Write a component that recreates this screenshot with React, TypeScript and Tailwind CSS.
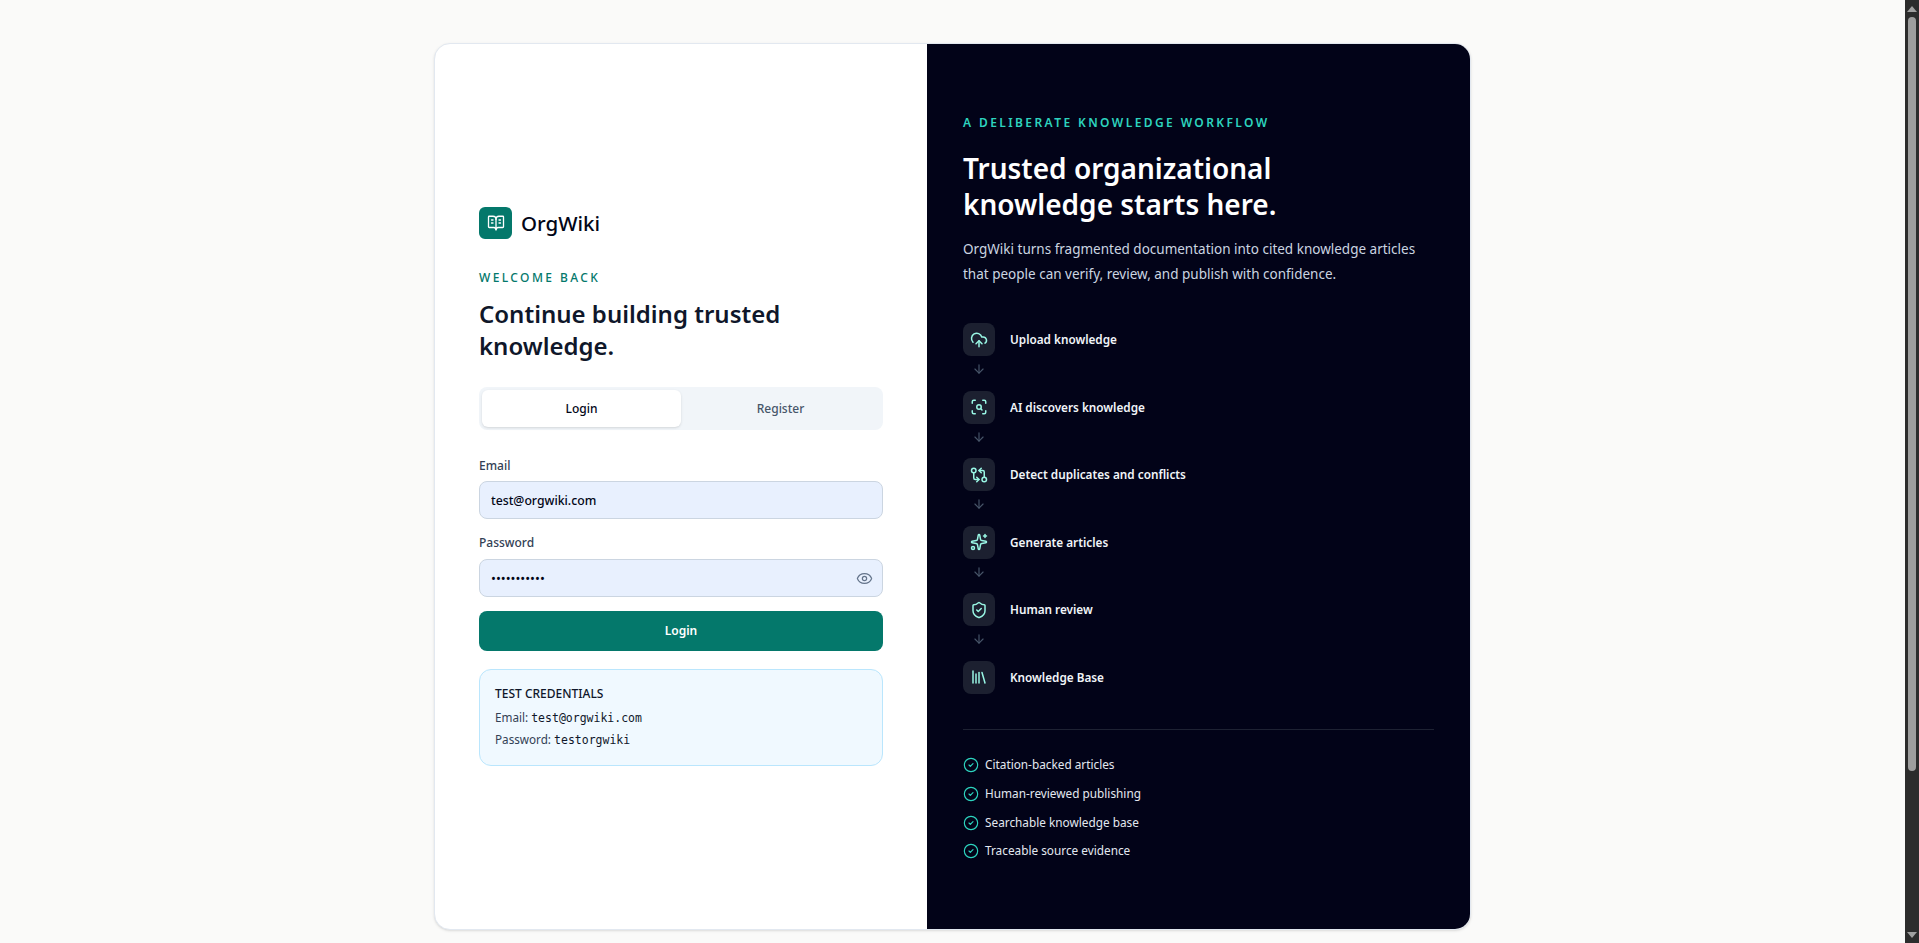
import { ArrowDown, BookOpenText, CircleCheck, CloudUpload, Eye, GitCompareArrows, Library, ScanSearch, ShieldCheck, Sparkles } from "lucide-react";

const steps = [
  { label: "Upload knowledge", Icon: CloudUpload },
  { label: "AI discovers knowledge", Icon: ScanSearch },
  { label: "Detect duplicates and conflicts", Icon: GitCompareArrows },
  { label: "Generate articles", Icon: Sparkles },
  { label: "Human review", Icon: ShieldCheck },
  { label: "Knowledge Base", Icon: Library },
];

const checks = ["Citation-backed articles", "Human-reviewed publishing", "Searchable knowledge base", "Traceable source evidence"];

export default function App() {
  return (
    <div className="flex h-screen overflow-hidden bg-[#fafaf9] font-['Noto_Sans',sans-serif] text-[#0f172a]">
      <main className="flex flex-1 justify-center pt-[43px]">
        <div className="flex h-[887px] w-[1037px] overflow-hidden rounded-2xl border border-[#e2e8f0] bg-white shadow-sm">
          <section className="flex w-[492px] flex-col justify-center pl-[44px] pr-[44px]">
            <div className="flex items-center gap-[9px]">
              <div className="flex h-[32px] w-[33px] items-center justify-center rounded-md bg-[#04786b] text-white">
                <BookOpenText size={18} strokeWidth={1.75} />
              </div>
              <span className="text-[20.5px] font-medium text-[#020617]">OrgWiki</span>
            </div>
            <p className="mt-[30px] text-[12px] leading-[18px] font-medium tracking-[0.2em] text-[#04786b]">WELCOME BACK</p>
            <h1 className="mt-[11px] text-[24px] leading-[32px] font-semibold text-[#0f172a]">Continue building trusted knowledge.</h1>
            <div className="mt-[25px] flex h-[43px] rounded-lg bg-[#f1f5f9] p-[3px]">
              <div className="flex flex-1 items-center justify-center rounded-md bg-white text-[12px] font-medium text-[#020617] shadow-sm">Login</div>
              <div className="flex flex-1 items-center justify-center text-[12px] font-medium text-[#475569]">Register</div>
            </div>
            <label className="mt-[27px] text-[12px] leading-[18px] font-medium text-[#334155]">Email</label>
            <input readOnly value="test@orgwiki.com" className="mt-[6px] h-[38px] w-full rounded-lg border border-[#cbd5e1] bg-[#e8f0fe] px-[11px] text-[12.25px] font-medium text-[#020617] outline-none" />
            <label className="mt-[15px] text-[12px] leading-[18px] font-medium text-[#334155]">Password</label>
            <div className="relative mt-[7px]">
              <input readOnly type="password" value="testorgwiki" className="h-[38px] w-full rounded-lg border border-[#cbd5e1] bg-[#e8f0fe] px-[11px] text-[13px] text-[#020617] outline-none" />
              <Eye size={17} strokeWidth={1.75} className="absolute right-[10px] top-[10.5px] text-[#64748b]" />
            </div>
            <button className="mt-[14px] h-[40px] w-full rounded-lg bg-[#04786b] text-[12px] font-semibold text-white">Login</button>
            <div className="mt-[18px] h-[97px] rounded-xl border border-[#bae6fd] bg-[#f0f9ff] px-[15px] pt-[15px] text-[11.7px] text-[#334155]">
              <p className="text-[12px] leading-[18px] font-medium text-[#0f172a]">TEST CREDENTIALS</p>
              <p className="mt-[4px] leading-[20px]">Email: <code className="font-['DejaVu_Sans_Mono',monospace] text-[11.5px] text-[#0f172a]">test@orgwiki.com</code></p>
              <p className="mt-0 leading-[22px]">Password: <code className="font-['DejaVu_Sans_Mono',monospace] text-[11.5px] text-[#0f172a]">testorgwiki</code></p>
            </div>
          </section>
          <section className="flex flex-1 flex-col justify-center bg-[#020318] pl-[36px] pr-[36px] pt-[7px] text-white">
            <p className="text-[12px] leading-[18px] font-semibold tracking-[0.2em] text-[#2dd4bf]">A DELIBERATE KNOWLEDGE WORKFLOW</p>
            <h2 className="mt-[18px] max-w-[400px] text-[28px] leading-[36px] font-semibold">Trusted organizational knowledge starts here.</h2>
            <p className="mt-[15px] text-[13.5px] leading-[25px] text-[#cbd5e1]">OrgWiki turns fragmented documentation into cited knowledge articles that people can verify, review, and publish with confidence.</p>
            <div className="mt-[36px] flex flex-col">
              {steps.map(({ label, Icon }, i) => (
                <div key={label}>
                  <div className="flex items-center gap-[15px]">
                    <div className="flex h-[33px] w-[32px] items-center justify-center rounded-lg bg-[#1c2030] text-[#99f6e4]">
                      <Icon size={18} />
                    </div>
                    <span className="text-[11.75px] font-semibold text-[#f1f5f9]">{label}</span>
                  </div>
                  {i < steps.length - 1 && (
                    <div className="flex h-[34.5px] w-[32px] justify-center pt-[6px] text-[#475569]">
                      <ArrowDown size={14} />
                    </div>
                  )}
                </div>
              ))}
            </div>
            <div className="mt-[35px] border-t border-[#1e2233] pt-[21px]">
              {checks.map((c) => (
                <div key={c} className="flex h-[28.7px] items-center gap-[6px] text-[11.8px] text-[#e2e8f0]">
                  <CircleCheck size={16} strokeWidth={1.75} className="text-[#2dd4bf]" />
                  <span>{c}</span>
                </div>
              ))}
            </div>
          </section>
        </div>
      </main>
      <div className="flex w-[14px] flex-col bg-[#2c2c2c]">
        <div className="flex h-[17px] items-center justify-center">
          <div className="h-0 w-0 border-x-[5px] border-b-[6px] border-x-transparent border-b-[#a0a0a0]" />
        </div>
        <div className="mx-[3px] h-[754px] rounded-full bg-[#9e9e9e]" />
        <div className="flex-1" />
        <div className="flex h-[17px] items-center justify-center">
          <div className="h-0 w-0 border-x-[5px] border-t-[6px] border-x-transparent border-t-[#a0a0a0]" />
        </div>
      </div>
    </div>
  );
}
